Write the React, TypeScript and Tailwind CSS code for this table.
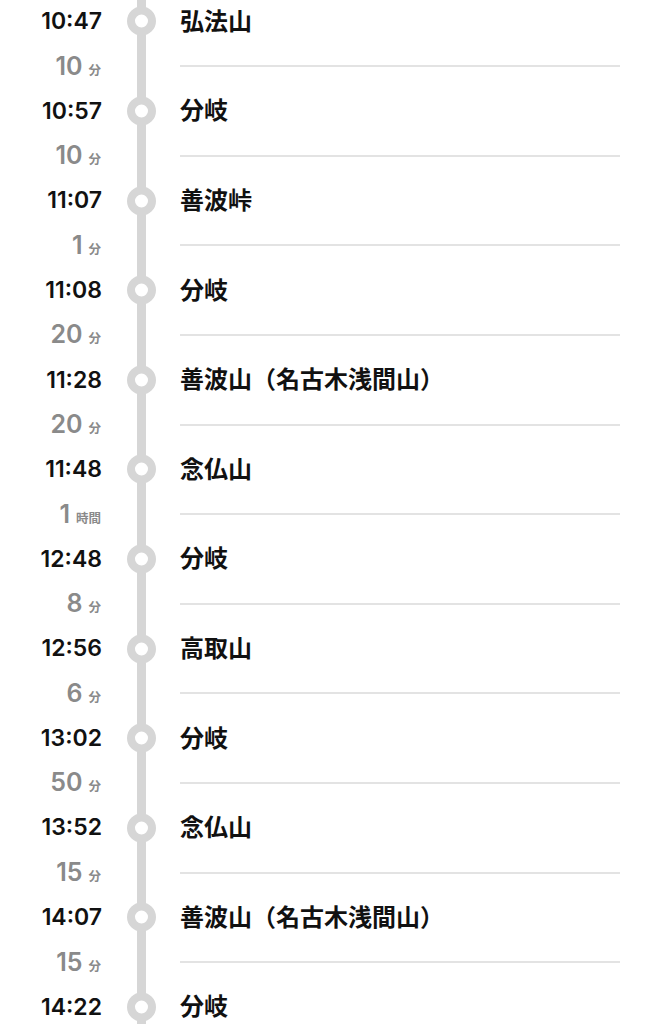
import React from "react";

type Stop = { time: string; name: string; dur?: string; unit?: string };

const stops: Stop[] = [
  { time: "10:47", name: "弘法山", dur: "10", unit: "分" },
  { time: "10:57", name: "分岐", dur: "10", unit: "分" },
  { time: "11:07", name: "善波峠", dur: "1", unit: "分" },
  { time: "11:08", name: "分岐", dur: "20", unit: "分" },
  { time: "11:28", name: "善波山（名古木浅間山）", dur: "20", unit: "分" },
  { time: "11:48", name: "念仏山", dur: "1", unit: "時間" },
  { time: "12:48", name: "分岐", dur: "8", unit: "分" },
  { time: "12:56", name: "高取山", dur: "6", unit: "分" },
  { time: "13:02", name: "分岐", dur: "50", unit: "分" },
  { time: "13:52", name: "念仏山", dur: "15", unit: "分" },
  { time: "14:07", name: "善波山（名古木浅間山）", dur: "15", unit: "分" },
  { time: "14:22", name: "分岐" },
];

const num = { fontFamily: 'Inter, "Noto Sans CJK JP", sans-serif' };
const jp = { fontFamily: '"Noto Sans CJK JP", sans-serif' };

export default function App() {
  return (
    <div className="w-[647px] h-[1024px] overflow-hidden bg-white">
      <div className="flex flex-col mt-[-1px]">
        {stops.map((s, i) => (
          <React.Fragment key={i}>
            {/* station row */}
            <div className="flex items-center h-[44.8px]">
              <div className="w-[102px] text-right text-[23px] font-semibold text-[#111]" style={num}>
                {s.time}
              </div>
              <div className="relative w-[78px] h-full flex justify-center">
                <div className="w-[9px] h-full bg-[#d6d6d6]" />
                <div className="absolute left-[25px] top-1/2 -translate-y-1/2 w-[29px] h-[29px] rounded-full border-[8.5px] border-[#d6d6d6] bg-white" />
              </div>
              <div className="text-[24px] font-bold text-[#111] leading-none mb-[3px]" style={jp}>
                {s.name}
              </div>
            </div>
            {/* duration row */}
            {s.dur && (
              <div className="flex items-center h-[44.8px]">
                <div className="w-[101px] flex justify-end items-baseline gap-[6px] text-[#8a8a8a]">
                  <span className="text-[25px] font-semibold leading-none" style={num}>{s.dur}</span>
                  <span className="text-[12.5px] font-bold leading-none" style={jp}>{s.unit}</span>
                </div>
                <div className="w-[79px] h-full flex justify-center pl-[1px]">
                  <div className="w-[9px] h-full bg-[#d6d6d6]" />
                </div>
                <div className="w-[440px] h-[2px] bg-[#e3e3e3]" />
              </div>
            )}
          </React.Fragment>
        ))}
      </div>
    </div>
  );
}
